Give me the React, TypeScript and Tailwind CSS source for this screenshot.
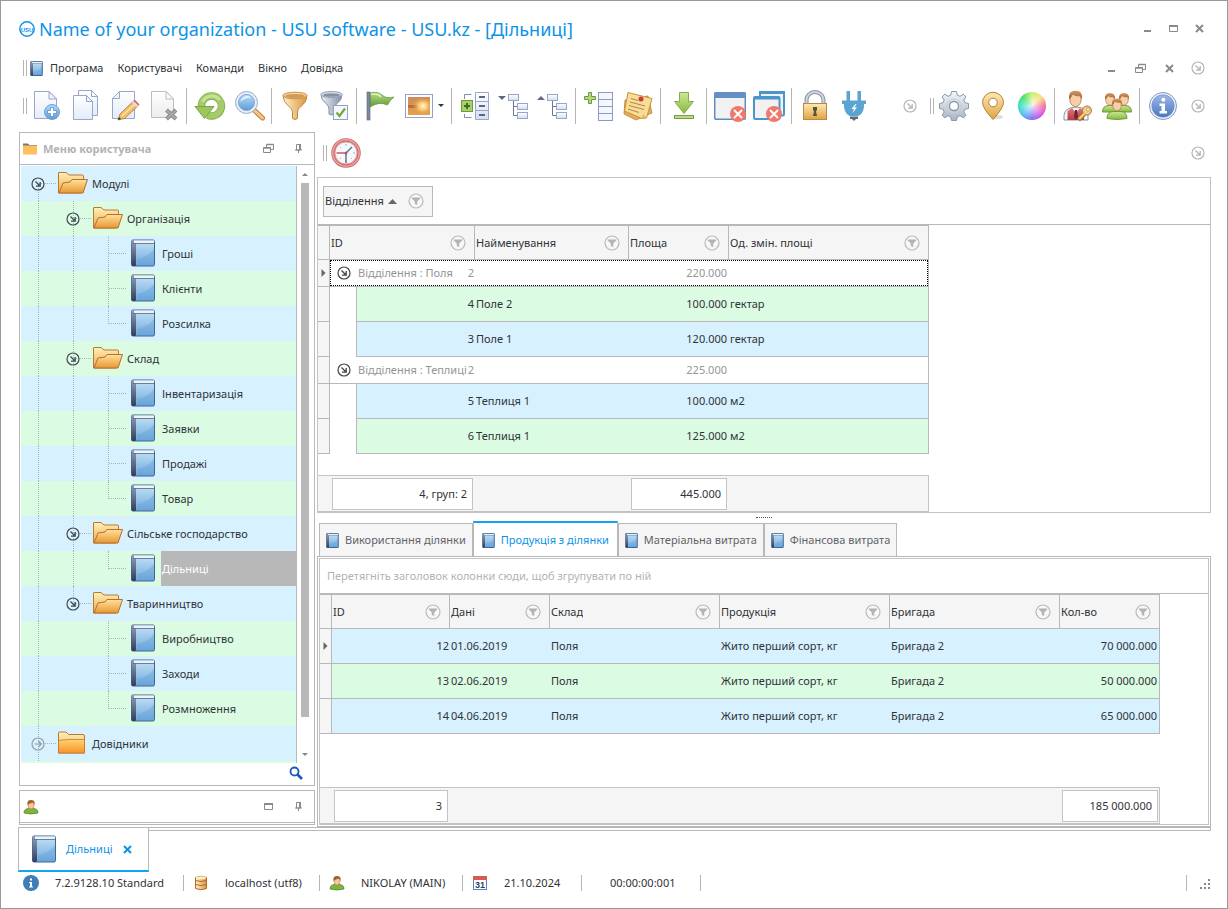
import React from "react";

type TreeRow = {
  label: string;
  level: number;
  selected?: boolean;
  lastChild?: boolean;
  closed?: boolean;
};

const TREE: TreeRow[] = [
  { label: "Модулі", level: 0 },
  { label: "Організація", level: 1 },
  { label: "Гроші", level: 2 },
  { label: "Клієнти", level: 2 },
  { label: "Розсилка", level: 2, lastChild: true },
  { label: "Склад", level: 1 },
  { label: "Інвентаризація", level: 2 },
  { label: "Заявки", level: 2 },
  { label: "Продажі", level: 2 },
  { label: "Товар", level: 2, lastChild: true },
  { label: "Сільське господарство", level: 1 },
  { label: "Дільниці", level: 2, selected: true, lastChild: true },
  { label: "Тваринництво", level: 1, lastChild: true },
  { label: "Виробництво", level: 2 },
  { label: "Заходи", level: 2 },
  { label: "Розмноження", level: 2, lastChild: true },
  { label: "Довідники", level: 0, closed: true },
];

// index of the last level 1 folder, its vertical line stops there
const LAST_FOLDER = 12;

const AREAS = [
  {
    name: "Поля",
    count: 2,
    total: "220.000",
    focused: true,
    rows: [
      { id: 4, name: "Поле 2", area: "100.000", unit: "гектар", green: true },
      { id: 3, name: "Поле 1", area: "120.000", unit: "гектар", green: false },
    ],
  },
  {
    name: "Теплиці",
    count: 2,
    total: "225.000",
    focused: false,
    rows: [
      { id: 5, name: "Теплиця 1", area: "100.000", unit: "м2", green: false },
      { id: 6, name: "Теплиця 1", area: "125.000", unit: "м2", green: true },
    ],
  },
];

const PRODUCTS = [
  { id: 12, date: "01.06.2019", qty: "70 000.000" },
  { id: 13, date: "02.06.2019", qty: "50 000.000" },
  { id: 14, date: "04.06.2019", qty: "65 000.000" },
];

const TABS = [
  "Використання ділянки",
  "Продукція з ділянки",
  "Матеріальна витрата",
  "Фінансова витрата",
];

/* ---------- gradients shared by all icons ---------- */

const Grad = ({ id, from, to, flat }: { id: string; from: string; to: string; flat?: boolean }) => (
  <linearGradient id={id} x1="0" y1="0" x2={flat ? "1" : "0"} y2={flat ? "0" : "1"}>
    <stop offset="0" stopColor={from} />
    <stop offset="1" stopColor={to} />
  </linearGradient>
);

const Defs = () => (
  <svg className="absolute h-0 w-0" aria-hidden="true">
    <defs>
      <Grad id="page" from="#ffffff" to="#e3ecf9" />
      <Grad id="grayPage" from="#ffffff" to="#ececec" />
      <Grad id="blue" from="#b9dcf7" to="#5f9bd8" />
      <Grad id="book" from="#c4e3f6" to="#6fa9dd" />
      <Grad id="spine" from="#8f9fbd" to="#333c57" />
      <Grad id="green" from="#cfe893" to="#86b93f" />
      <Grad id="gold" from="#fde9b4" to="#e0a344" />
      <Grad id="goldFlat" from="#fff0cb" to="#d9963c" flat />
      <Grad id="folderBack" from="#fff0b8" to="#eda94a" />
      <Grad id="folderFront" from="#ffe29a" to="#e79735" />
      <Grad id="folderClosed" from="#ffd272" to="#f9932a" />
      <Grad id="steel" from="#f3f6fa" to="#a9b4c4" />
      <Grad id="steelFlat" from="#eef2f7" to="#8390a5" flat />
      <Grad id="sunset" from="#c98a5e" to="#e8a04a" />
      <Grad id="flag" from="#b9dc85" to="#629a38" />
      <Grad id="info" from="#9db9e6" to="#4a76c0" />
      <Grad id="hair" from="#d79a63" to="#9c5c2d" />
      <Grad id="red" from="#e07a7a" to="#b83a42" />
      <Grad id="cell" from="#ffffff" to="#d5def1" />
      <radialGradient id="sun" cx="0.68" cy="0.5" r="0.5">
        <stop offset="0" stopColor="#fffbe0" />
        <stop offset="0.4" stopColor="#ffd47a" stopOpacity="0.9" />
        <stop offset="1" stopColor="#e8953a" stopOpacity="0" />
      </radialGradient>
    </defs>
  </svg>
);

const Svg = ({ children }: { children: React.ReactNode }) => (
  <svg viewBox="0 0 32 32" className="h-8 w-8 shrink-0" fill="none" aria-hidden="true">
    {children}
  </svg>
);

/* ---------- toolbar icons ---------- */

const NewIcon = () => (
  <Svg>
    <path d="M3.500 1.500H18L25.500 9V28.500H3.500Z" fill="url(#page)" stroke="#98a6cc" />
    <path d="M18 1.500V9H25.500Z" fill="#eef3fb" stroke="#98a6cc" />
    <circle cx="21" cy="22" r="7.500" fill="url(#blue)" stroke="#6b9fd8" />
    <path d="M19.500 17.500h3v3h3v3h-3v3h-3v-3h-3v-3h3Z" fill="#fff" stroke="#4a83c6" strokeWidth="0.700" />
  </Svg>
);

const CopyIcon = () => (
  <Svg>
    <path d="M8.500 0.500H21.500L27.500 6.500V25.500H8.500Z" fill="url(#page)" stroke="#98a6cc" />
    <path d="M21.500 0.500V6.500H27.500" stroke="#98a6cc" />
    <path d="M3.500 5.500H16.500L22.500 11.500V29.500H3.500Z" fill="url(#page)" stroke="#98a6cc" />
    <path d="M16.500 5.500V11.500H22.500Z" fill="#eef3fb" stroke="#98a6cc" />
  </Svg>
);

const EditIcon = () => (
  <Svg>
    <path d="M10.500 1.500H25.500V28.500H3.500V8.500Z" fill="url(#page)" stroke="#98a6cc" />
    <path d="M10.500 1.500V8.500H3.500Z" fill="#eef3fb" stroke="#98a6cc" />
    <path d="M9 30L11 24L24.500 11L29.500 15.500L15.500 28.500Z" fill="#f3bd67" stroke="#a8763a" strokeWidth="0.800" />
    <path d="M24.500 11L26 9.800L30.500 14.500L29.500 15.500Z" fill="#d9635c" />
    <path d="M22.500 13L24.500 11L29.500 15.500L27.500 17.500Z" fill="#d4d7de" />
    <path d="M13 26L26.500 13.500" stroke="#fbe3ae" strokeWidth="1.500" />
    <path d="M9 30L10 27L12 29Z" fill="#333" />
  </Svg>
);

const DeleteIcon = () => (
  <Svg>
    <path d="M3.500 1.500H18L25.500 9V27.500H3.500Z" fill="url(#grayPage)" stroke="#bdbdbd" />
    <path d="M18 1.500V9H25.500Z" fill="#fafafa" stroke="#bdbdbd" />
    <path d="M18.500 20L28 29M28 20L18.500 29" stroke="#8b8b8b" strokeWidth="4" />
    <path d="M19 20.500L27.500 28.500M27.500 20.500L19 28.500" stroke="#a9a9a9" strokeWidth="2" />
  </Svg>
);

const RefreshIcon = () => (
  <Svg>
    <path d="M7.500 17A10 10 0 1 1 13.500 25.200" stroke="#7fa84a" strokeWidth="7.400" />
    <path d="M7.500 17A10 10 0 1 1 14 25.200" stroke="#a3cb68" strokeWidth="6" />
    <path d="M8.500 12A10 10 0 0 1 25.500 10" stroke="#c6e297" strokeWidth="3" />
    <path d="M1 16.500H20L10.500 28.500Z" fill="#9cc65a" stroke="#7aa545" />
  </Svg>
);

const SearchIcon = () => (
  <Svg>
    <path d="M21 20L29.500 28" stroke="#b98443" strokeWidth="5" strokeLinecap="round" />
    <path d="M22 21L29.500 28" stroke="#f6c67d" strokeWidth="3" strokeLinecap="round" />
    <circle cx="13.500" cy="12.500" r="11" fill="#e9eef6" stroke="#9eabc6" />
    <circle cx="13.500" cy="12.500" r="8" fill="url(#blue)" stroke="#7ba6dc" />
    <path d="M7.500 12A6.500 6.500 0 0 1 18 7.500Q10 8 7.500 12Z" fill="#e3f3ff" />
  </Svg>
);

const FunnelIcon = () => (
  <Svg>
    <path d="M4 5.500Q4 12 10 16.500Q13.500 19 13.500 22V28.500Q16 30.500 18.500 28.500V22Q18.500 19 22 16.500Q28 12 28 5.500Z" fill="url(#goldFlat)" stroke="#c08a43" />
    <ellipse cx="16" cy="5.500" rx="12" ry="3.300" fill="#f8d69b" stroke="#c78f45" />
    <ellipse cx="16" cy="6" rx="10" ry="2" fill="#d39a52" />
  </Svg>
);

const FunnelCheckIcon = () => (
  <Svg>
    <path d="M3 4.500Q3 10 8 13.500Q11 16 11 19V24Q13.500 26 16 24V19Q16 16 19 13.500Q24 10 24 4.500Z" fill="url(#steelFlat)" stroke="#8590a3" />
    <ellipse cx="13.500" cy="4.500" rx="10.500" ry="3" fill="#dde3ec" stroke="#8f9bae" />
    <ellipse cx="13.500" cy="5" rx="8.500" ry="1.800" fill="#8592a8" />
    <rect x="15.500" y="15.500" width="14" height="14" fill="#f4f7fd" stroke="#93a1c5" />
    <path d="M18.500 22.500L21.500 26L27 18.500" stroke="#72a83b" strokeWidth="2.200" />
  </Svg>
);

const FlagIcon = () => (
  <Svg>
    <path d="M6 3Q14 1 18 5T30 7Q26 10 23.500 15Q15 11 6 17Z" fill="url(#flag)" stroke="#6a9a43" strokeWidth="0.800" />
    <path d="M7 4.500Q14 3 17 7" stroke="#dff0bf" strokeWidth="1.500" />
    <rect x="3" y="2" width="3" height="28" fill="#7d899d" stroke="#56617a" strokeWidth="0.600" />
  </Svg>
);

const PictureIcon = () => (
  <Svg>
    <rect x="2.500" y="4.500" width="27" height="23" fill="#fff" stroke="#93a1cc" />
    <rect x="5" y="7" width="22" height="18" fill="url(#sunset)" />
    <path d="M5 15H27V18H5Z" fill="#9b5732" opacity="0.600" />
    <rect x="5" y="7" width="22" height="18" fill="url(#sun)" />
  </Svg>
);

const ExpandIcon = () => (
  <Svg>
    <path d="M12.500 4.500H5.500V9M12.500 27.500H5.500V24" stroke="#7f8db0" />
    <rect x="2.500" y="10.500" width="11" height="11" fill="#a9cf6c" stroke="#6d9a3f" />
    <path d="M8 13V19M5 16H11" stroke="#3f6f1e" strokeWidth="2" />
    <path d="M16.500 2.500H29.500V29.500H16.500Z" fill="url(#cell)" stroke="#98a6cc" />
    <path d="M16.500 11.500H29.500M16.500 20.500H29.500" stroke="#98a6cc" />
    <path d="M20 7H26M20 16H26M20 25H26" stroke="#5a6684" strokeWidth="2" />
  </Svg>
);

const TreeIcon = ({ up }: { up?: boolean }) => (
  <Svg>
    <path d={up ? "M0 10H8L4 6Z" : "M0 6H8L4 10Z"} fill="#5f6a80" />
    <path d="M15.500 10V25.500H19M15.500 16.500H19" stroke="#6d7890" />
    <rect x="10.500" y="4.500" width="10" height="6" fill="url(#cell)" stroke="#98a6cc" />
    <rect x="19.500" y="13.500" width="10" height="6" fill="url(#cell)" stroke="#98a6cc" />
    <rect x="19.500" y="22.500" width="10" height="6" fill="url(#cell)" stroke="#98a6cc" />
  </Svg>
);

const AddColumnIcon = () => (
  <Svg>
    <path d="M5.500 2.500h3v4h4v3h-4v4h-3v-4h-4v-3h4Z" fill="#b5d97a" stroke="#6d9a3f" />
    <rect x="15.500" y="2.500" width="14" height="28" fill="#f3f7fe" stroke="#8b99c4" />
    <path d="M15.500 9.500H29.500M15.500 16.500H29.500M15.500 23.500H29.500" stroke="#8b99c4" />
  </Svg>
);

const NoteIcon = () => (
  <Svg>
    <path d="M3 10L26 6L30 23L14 30L2 24Z" fill="#e2ad5d" stroke="#b98238" strokeWidth="0.800" />
    <path d="M6 2.500L30 8.500L24.500 28L20 28.500L2.500 21Z" fill="#fbdc94" stroke="#c4933f" />
    <path d="M24.500 28L20 28.500L21 24Z" fill="#e6b45e" />
    <path d="M9 8.500L16 10.500M8 12L23 16M7 15.500L22 19.500M6 19L17 22.500" stroke="#a88a52" />
    <circle cx="19" cy="9" r="2.500" fill="#c93a3a" />
  </Svg>
);

const DownloadIcon = () => (
  <Svg>
    <path d="M11.500 2.500H20.500V11.500H25.500L16 23.500L6.500 11.500H11.500Z" fill="url(#green)" stroke="#8aac4f" />
    <rect x="6.500" y="25.500" width="19" height="3" fill="#b9d98a" stroke="#7a9d44" />
  </Svg>
);

const CloseBadge = ({ cx }: { cx: number }) => (
  <g>
    <circle cx={cx} cy="24" r="8" fill="#f0786c" />
    <path d={`M${cx - 4} 20L${cx + 4} 28M${cx + 4} 20L${cx - 4} 28`} stroke="#fff" strokeWidth="2" />
  </g>
);

const CloseWindowIcon = () => (
  <Svg>
    <rect x="0.700" y="2.700" width="30.600" height="26.600" rx="1.500" fill="#f2f2f2" stroke="#5b8cc0" strokeWidth="1.500" />
    <path d="M0 3.500Q0 2 1.500 2H30.500Q32 2 32 3.500V8H0Z" fill="#6590c6" />
    <CloseBadge cx={24} />
  </Svg>
);

const CloseAllIcon = () => (
  <Svg>
    <rect x="7" y="2" width="24" height="23.500" rx="1.500" fill="#f2f2f2" stroke="#4a95cc" strokeWidth="2" />
    <path d="M6 2.500H32" stroke="#4a95cc" strokeWidth="3" />
    <rect x="1" y="7" width="25.500" height="22" rx="1.500" fill="#f2f2f2" stroke="#4a95cc" strokeWidth="2" />
    <path d="M0.500 8H27" stroke="#4a95cc" strokeWidth="3" />
    <CloseBadge cx={21} />
  </Svg>
);

const LockIcon = () => (
  <Svg>
    <path d="M7.500 14V10A8.500 8 0 0 1 24.500 10V14" stroke="#87919f" strokeWidth="4" />
    <path d="M7.500 14V10A8.500 8 0 0 1 24.500 10V14" stroke="#cfd6de" strokeWidth="2" />
    <rect x="4.500" y="13.500" width="23" height="16" fill="url(#gold)" stroke="#b98a3e" />
    <path d="M14 17H18V20L17 21.500L18 26H14L15 21.500L14 20Z" fill="#5d5337" />
  </Svg>
);

const PlugIcon = () => (
  <Svg>
    <path d="M8.500 1H12V11H8.500ZM19.500 1H23V11H19.500Z" fill="#5ba3d3" />
    <path d="M4 10.500H28V14H26V17Q25 24 20 26H12Q7 24 6 17V14H4Z" fill="#5ba3d3" />
    <path d="M17.500 14L13.500 19H16L14.500 23L19 17.500H16.500L18.500 14Z" fill="#fff" />
    <path d="M12 26.500H20V29H18L16 31L14 29H12Z" fill="#5f6b76" />
  </Svg>
);

const GearIcon = () => (
  <Svg>
    <path
      d="M13.500 1.500H18.500L19.300 5.200L22 6.300L25.200 4.200L27.900 6.900L25.800 10L26.900 12.700L30.500 13.500V18.500L26.900 19.300L25.800 22L27.900 25.200L25.200 27.800L22 25.700L19.300 26.800L18.500 30.500H13.500L12.700 26.800L10 25.700L6.800 27.800L4.100 25.200L6.200 22L5.100 19.300L1.500 18.500V13.500L5.100 12.700L6.200 10L4.100 6.900L6.800 4.200L10 6.300L12.700 5.200Z"
      fill="url(#steel)"
      stroke="#8b96a8"
    />
    <circle cx="16" cy="16" r="7" stroke="#c5cdd9" />
    <circle cx="16" cy="16" r="4.500" fill="#fff" stroke="#8b96a8" strokeWidth="1.300" />
  </Svg>
);

const PinIcon = () => (
  <Svg>
    <ellipse cx="20" cy="27" rx="6" ry="2" fill="#dcdcdc" />
    <path d="M16 29.500Q5.500 18 5.500 12.500A10.500 10.200 0 0 1 26.500 12.500Q26.500 18 16 29.500Z" fill="url(#gold)" stroke="#b5813a" />
    <circle cx="16" cy="12.500" r="4.300" fill="#fff" stroke="#b5813a" />
  </Svg>
);

const ColorWheel = () => (
  <span className="h-7 w-7 rounded-full bg-[radial-gradient(circle,#ffffffcc_0%,#ffffff00_70%),conic-gradient(from_90deg,#f06a9a,#d050e8,#7a6af5,#4ab8f5,#35e0c0,#3be060,#c8f070,#f8e070,#f06a9a)]" />
);

const Head = ({ x, y }: { x: number; y: number }) => (
  <g transform={`translate(${x} ${y})`}>
    <ellipse cx="0" cy="1" rx="4.300" ry="5.200" fill="#f8cfa6" stroke="#b47a4b" strokeWidth="0.700" />
    <path d="M-4.800 0.500Q-6-6 0-6Q6-6 4.800 0.500L3.500-2Q0-1-2-3Q-3-1-4.800 0.500Z" fill="url(#hair)" />
  </g>
);

const UserKeyIcon = () => (
  <Svg>
    <path d="M2 30Q1 20 8 18L14 17L20 18Q27 20 26 30Z" fill="#f4f6fa" stroke="#8792a5" />
    <path d="M5.500 30V21L10 18L14 23L18 18L22 21V30Z" fill="url(#red)" />
    <path d="M13 20H15L16 27L14 30L12 27Z" fill="#6a2530" />
    <g transform="translate(13.500 8.500) scale(1.300)">
      <Head x={0} y={0} />
    </g>
    <circle cx="25" cy="20.500" r="4.500" fill="#f6cd83" stroke="#a87532" />
    <path d="M22.500 24L16.500 30" stroke="#a87532" strokeWidth="4" />
    <path d="M22.500 23.500L17 29" stroke="#f6cd83" strokeWidth="2.400" />
    <circle cx="26" cy="19.500" r="1.500" fill="#fff" stroke="#a87532" strokeWidth="0.600" />
  </Svg>
);

const UsersIcon = () => (
  <Svg>
    <path d="M1.500 22Q1.500 15.500 8 15.500H12L16 22ZM30.500 22Q30.500 15.500 24 15.500H20L16 22Z" fill="url(#green)" stroke="#6f9a3c" />
    <Head x={9} y={9} />
    <Head x={23} y={9} />
    <path d="M6 28.500Q6 22 12 21.500H20Q26 22 26 28.500Q16 30.500 6 28.500Z" fill="url(#green)" stroke="#6f9a3c" />
    <Head x={16} y={14.500} />
  </Svg>
);

const InfoIcon = () => (
  <Svg>
    <circle cx="16" cy="16" r="13.500" fill="#eef2fa" stroke="#8296c2" />
    <circle cx="16" cy="16" r="11.200" fill="url(#info)" stroke="#6a8cc8" strokeWidth="0.700" />
    <circle cx="16.300" cy="9.700" r="2" fill="#fff" />
    <path d="M12.500 13.500H18V21H20V23.500H12.500V21H14.500V16H12.500Z" fill="#fff" />
  </Svg>
);

const ClockIcon = () => (
  <svg viewBox="0 0 32 32" className="h-8 w-8" fill="none" aria-hidden="true">
    <circle cx="16" cy="16" r="13" stroke="#cf676a" strokeWidth="3.500" />
    <circle cx="16" cy="16" r="13.200" stroke="#eba3a3" strokeWidth="1.500" />
    <circle cx="16" cy="16" r="11" fill="#f6f8fc" stroke="#c4686c" strokeWidth="0.600" />
    <path d="M16 7V8.500M16 23.500V25M25 16H23.500M22 22L21.300 21.300M10 22L10.700 21.300M10 10L10.700 10.700" stroke="#8d97aa" />
    <path d="M16 16L22 10M16 16V26" stroke="#68758c" strokeWidth="1.500" />
    <path d="M6.500 16H16" stroke="#d5545b" strokeWidth="1.500" />
    <circle cx="16" cy="16" r="1.500" fill="#68758c" />
  </svg>
);

/* ---------- small icons ---------- */

const Book = ({ small }: { small?: boolean }) => (
  <svg
    viewBox="0 0 26 28"
    preserveAspectRatio="none"
    className={small ? "h-[15px] w-[13px] shrink-0" : "h-7 w-[26px] shrink-0"}
    aria-hidden="true"
  >
    <rect x="1.500" y="1" width="23" height="26" rx="1.500" fill="url(#book)" stroke="#3f6496" strokeWidth={small ? 2 : 1} />
    <rect x="1.500" y="1" width="4.500" height="26" rx="1.500" fill="url(#spine)" />
    <path d="M4 1.500H24V4H4Z" fill="#eef3f8" />
    <path d="M3 4.500H24" stroke="#54698c" strokeWidth="0.800" />
    <path d="M7 20Q18 18 24 10V26H7Z" fill="#5d9ad4" opacity="0.350" />
  </svg>
);

const Folder = ({ closed }: { closed?: boolean }) => (
  <svg viewBox="0 0 32 24" className="h-6 w-8 shrink-0" aria-hidden="true">
    {closed ? (
      <>
        <path d="M1.500 22V2Q1.500 1 2.500 1H9L11.500 3.500H26Q27.500 3.500 27.500 5V22Z" fill="url(#folderBack)" stroke="#b7792f" />
        <path d="M1.500 22V9.500L12 8.500H27.500V22Z" fill="url(#folderClosed)" stroke="#c27a2c" strokeWidth="0.800" />
      </>
    ) : (
      <>
        <path d="M1.500 22V2Q1.500 1.500 2 1.500H9L12 4H25.500Q26.500 4 26.500 5V10L24 22Z" fill="url(#folderBack)" stroke="#b7792f" />
        <path d="M2 22L6 12L13 11L15 8.500H30.500L26 22Z" fill="url(#folderFront)" stroke="#b7702b" />
      </>
    )}
  </svg>
);

const ArrowCircle = ({ tone, right }: { tone: string; right?: boolean }) => (
  <svg viewBox="0 0 14 14" className="h-[14px] w-[14px] shrink-0" fill="none" stroke={tone} aria-hidden="true">
    <circle cx="7" cy="7" r="6" strokeWidth="1.200" />
    {right ? <path d="M3.500 7H10M7.500 4L10.300 7L7.500 10" strokeWidth="1.200" /> : <path d="M4.500 4.500L9 9M9.200 5V9.200H5" strokeWidth="1.300" />}
  </svg>
);

const FilterButton = () => (
  <button type="button" aria-label="Фільтр" className="shrink-0">
    <svg viewBox="0 0 16 16" className="h-4 w-4" aria-hidden="true">
      <circle cx="8" cy="8" r="7" fill="#f7f7f7" stroke="#b9b9b9" strokeWidth="1.200" />
      <path d="M3.800 4.500H12.200V5.500L9.200 8.500V12L6.800 11V8.500L3.800 5.500Z" fill="#b4b4b4" />
    </svg>
  </button>
);

const Minimize = () => (
  <svg viewBox="0 0 11 11" className="h-[11px] w-[11px]" aria-hidden="true">
    <path d="M2 7H9V9H2Z" fill="#8a8a8a" />
  </svg>
);

const Maximize = () => (
  <svg viewBox="0 0 11 11" className="h-[11px] w-[11px]" aria-hidden="true">
    <path d="M1.500 2.500H9.500V8.500H1.500Z" fill="none" stroke="#8a8a8a" />
    <path d="M1 3H10" stroke="#8a8a8a" strokeWidth="2" />
  </svg>
);

const Restore = () => (
  <svg viewBox="0 0 11 11" className="h-[11px] w-[11px]" fill="none" stroke="#8a8a8a" aria-hidden="true">
    <path d="M3.500 4V1.500H10.500V6.500H8" />
    <path d="M0.500 4.500H7.500V9.500H0.500Z" fill="#fff" />
    <path d="M3.500 1.500H10.500M0.500 5H7.500" strokeWidth="1.500" />
  </svg>
);

const Cross = ({ tone = "#8a8a8a" }: { tone?: string }) => (
  <svg viewBox="0 0 11 11" className="h-[11px] w-[11px]" aria-hidden="true">
    <path d="M2 2L9 9M9 2L2 9" stroke={tone} strokeWidth="2" />
  </svg>
);

const PushPin = () => (
  <svg viewBox="0 0 11 11" className="h-[11px] w-[11px]" aria-hidden="true">
    <path d="M3.500 1.500H7V7H3.500Z" fill="none" stroke="#8a8a8a" />
    <path d="M6 1H8V7H6ZM2 6.500H9V7.500H2ZM5 7.500H6V10H5Z" fill="#8a8a8a" />
  </svg>
);

const UserBust = () => (
  <svg viewBox="0 0 16 16" className="h-4 w-4 shrink-0" aria-hidden="true">
    <path d="M1 14Q1 9.500 6 9.500H10Q15 9.500 15 14Q8 16 1 14Z" fill="#7fb53c" stroke="#4f7d25" strokeWidth="0.700" />
    <ellipse cx="8" cy="6" rx="3" ry="4" fill="#f7c898" stroke="#a66a3b" strokeWidth="0.500" />
    <path d="M4.500 6Q3.500 1 8 1Q12.500 1 11.500 6L10 3.500Q7 4 4.500 6Z" fill="#a5622f" />
  </svg>
);

const Database = () => (
  <svg viewBox="0 0 16 16" className="h-4 w-4 shrink-0" aria-hidden="true">
    <path d="M2.500 2.500Q8 0 13.500 2.500V13.500Q8 16 2.500 13.500Z" fill="url(#goldFlat)" stroke="#b3682a" />
    <path d="M2.500 5.500Q8 7.500 13.500 5.500M2.500 9.500Q8 11.500 13.500 9.500" fill="none" stroke="#b3682a" />
    <ellipse cx="8" cy="2.800" rx="5" ry="1.500" fill="#ffeebd" />
  </svg>
);

const Calendar = () => (
  <svg viewBox="0 0 16 16" className="h-4 w-4 shrink-0" aria-hidden="true">
    <rect x="1.500" y="1.500" width="13" height="13" fill="#fff" stroke="#5f7fb8" />
    <path d="M1 1H15V5H1Z" fill="#d65b4c" />
    <text x="8" y="13" textAnchor="middle" fontSize="9" fontWeight="700" fontFamily="Liberation Sans, sans-serif" fill="#2d3f66">
      31
    </text>
  </svg>
);

/* ---------- building blocks ---------- */

const Grip = () => <span className="h-4 w-1 shrink-0 border-x border-[#b5b5b5]" />;

const Separator = () => (
  <span className="flex w-[7px] shrink-0 justify-center">
    <span className="h-9 w-px bg-[#b5b5b5]" />
  </span>
);

const Tool = ({ label, children }: { label: string; children: React.ReactNode }) => (
  <button type="button" aria-label={label} className="flex h-10 w-[39px] shrink-0 items-center justify-center">
    {children}
  </button>
);

const IconButton = ({ label, children }: { label: string; children: React.ReactNode }) => (
  <button type="button" aria-label={label} className="flex h-4 w-[26px] shrink-0 items-center justify-center">
    {children}
  </button>
);

const StatusSeparator = () => <span className="h-4 w-px shrink-0 bg-[#b5b5b5]" />;

const TreeItem = ({ row, index }: { row: TreeRow; index: number }) => {
  const expander = (
    <button type="button" aria-label="Згорнути" className="relative z-10 flex">
      <ArrowCircle tone={row.closed ? "#8fa3ad" : "#3f4a4f"} right={row.closed} />
    </button>
  );

  return (
    <li className="flex h-[35px] items-center odd:bg-[#d8f1ff] even:bg-[#dcfbe3]">
      {Array.from({ length: row.level + 1 }, (_, depth) => {
        const own = depth === row.level;
        // the level 1 line runs under every row between the first and the last folder
        const full = depth === 0 ? index > 0 : depth === 1 && index < LAST_FOLDER;
        const half = (own && depth === 2) || (depth === 1 && index === LAST_FOLDER) || (depth === 0 && index === 0);
        return (
          <span key={depth} className="relative flex h-full w-[35px] shrink-0 items-center justify-center pr-px">
            {full || (own && depth === 2 && !row.lastChild) ? (
              <span className="absolute inset-y-0 left-[17px] border-l border-dotted border-[#aab2b5]" />
            ) : (
              half && (
                <span
                  className={
                    depth === 0
                      ? "absolute top-1/2 bottom-0 left-[17px] border-l border-dotted border-[#aab2b5]"
                      : "absolute top-0 bottom-1/2 left-[17px] border-l border-dotted border-[#aab2b5]"
                  }
                />
              )
            )}
            {own && <span className="absolute top-[17px] right-0 left-[18px] border-t border-dotted border-[#aab2b5]" />}
            {own && row.level < 2 && expander}
          </span>
        );
      })}
      <span className="flex w-[35px] shrink-0 justify-center pr-0.5 pb-px">
        {row.level === 2 ? <Book /> : <Folder closed={row.closed} />}
      </span>
      <span
        className={
          row.selected
            ? "flex h-full flex-1 items-center bg-[#b8b8b8] pl-px text-white"
            : "flex h-full flex-1 items-center pl-px"
        }
      >
        {row.label}
      </span>
    </li>
  );
};

const HeaderCell = ({ children, span }: { children: React.ReactNode; span?: number }) => (
  <th colSpan={span} className="h-[34px] border-r border-b border-[#b8b8b8] bg-[#f5f5f5] p-0 pr-2 pl-px text-left font-normal">
    <div className="flex items-center justify-between">
      <span className="truncate">{children}</span>
      <FilterButton />
    </div>
  </th>
);

const Marker = ({ active }: { active?: boolean }) => (
  <td className="border-r border-b border-[#b8b8b8] bg-[#f5f5f5] p-0">
    {active && (
      <svg viewBox="0 0 5 8" className="mx-auto h-2 w-[5px]" aria-hidden="true">
        <path d="M0.500 0L4.500 4L0.500 8Z" fill="#666" />
      </svg>
    )}
  </td>
);

const AreaGrid = () => (
  <table className="w-[611px] table-fixed border-separate border-spacing-0 border-t border-[#b8b8b8]">
    <colgroup>
      <col className="w-3" />
      <col className="w-[27px]" />
      <col className="w-[118px]" />
      <col className="w-[154px]" />
      <col className="w-[100px]" />
      <col className="w-[200px]" />
    </colgroup>
    <thead>
      <tr>
        <th className="border-r border-b border-[#b8b8b8] bg-[#f5f5f5] p-0" />
        <HeaderCell span={2}>ID</HeaderCell>
        <HeaderCell>Найменування</HeaderCell>
        <HeaderCell>Площа</HeaderCell>
        <HeaderCell>Од. змін. площі</HeaderCell>
      </tr>
    </thead>
    <tbody>
      {AREAS.map((group) => (
        <React.Fragment key={group.name}>
          <tr className="h-[27px]">
            <Marker active={group.focused} />
            <td colSpan={5} className="border-r border-b border-[#b8b8b8] p-0">
              <div
                className={
                  group.focused
                    ? "grid h-[26px] grid-cols-[26px_118px_154px_100px_1fr] items-center border border-dotted border-black text-[#959595]"
                    : "grid h-[26px] grid-cols-[26px_118px_154px_100px_1fr] items-center border border-transparent text-[#959595]"
                }
              >
                <button type="button" aria-label="Згорнути групу" className="flex justify-center">
                  <ArrowCircle tone="#444" />
                </button>
                <span className="flex justify-between pr-px pl-px whitespace-nowrap">
                  <span>Відділення : {group.name}</span>
                  <span>{group.count}</span>
                </span>
                <span />
                <span className="pr-0.5 text-right">{group.total}</span>
              </div>
            </td>
          </tr>
          {group.rows.map((row) => {
            const tint = row.green ? "bg-[#dcfbe3]" : "bg-[#d8f1ff]";
            return (
              <tr key={row.id} className="h-[35px]">
                <Marker />
                <td className="border-r border-[#b8b8b8] p-0" />
                <td className={`border-b border-[#b8b8b8] p-0 pr-px text-right ${tint}`}>{row.id}</td>
                <td className={`border-b border-[#b8b8b8] p-0 pl-px ${tint}`}>{row.name}</td>
                <td className={`border-b border-[#b8b8b8] p-0 pr-0.5 text-right ${tint}`}>{row.area}</td>
                <td className={`border-r border-b border-[#b8b8b8] p-0 pl-px ${tint}`}>{row.unit}</td>
              </tr>
            );
          })}
        </React.Fragment>
      ))}
    </tbody>
  </table>
);

const ProductGrid = () => (
  <table className="w-[840px] table-fixed border-separate border-spacing-0 border-t border-[#b8b8b8]">
    <colgroup>
      <col className="w-3" />
      <col className="w-[118px]" />
      <col className="w-[100px]" />
      <col className="w-[170px]" />
      <col className="w-[170px]" />
      <col className="w-[170px]" />
      <col className="w-[100px]" />
    </colgroup>
    <thead>
      <tr>
        <th className="border-r border-b border-[#b8b8b8] bg-[#f5f5f5] p-0" />
        <HeaderCell>ID</HeaderCell>
        <HeaderCell>Дані</HeaderCell>
        <HeaderCell>Склад</HeaderCell>
        <HeaderCell>Продукція</HeaderCell>
        <HeaderCell>Бригада</HeaderCell>
        <HeaderCell>Кол-во</HeaderCell>
      </tr>
    </thead>
    <tbody>
      {PRODUCTS.map((row, i) => (
        <tr key={row.id} className="h-[35px] odd:bg-[#d8f1ff] even:bg-[#dcfbe3]">
          <Marker active={i === 0} />
          <td className="border-b border-[#b8b8b8] p-0 pr-px text-right">{row.id}</td>
          <td className="border-b border-[#b8b8b8] p-0 pl-px">{row.date}</td>
          <td className="border-b border-[#b8b8b8] p-0 pl-px">Поля</td>
          <td className="border-b border-[#b8b8b8] p-0 pl-px">Жито перший сорт, кг</td>
          <td className="border-b border-[#b8b8b8] p-0 pl-px">Бригада 2</td>
          <td className="border-r border-b border-[#b8b8b8] p-0 pr-0.5 text-right">{row.qty}</td>
        </tr>
      ))}
    </tbody>
  </table>
);

export default function App() {
  return (
    <div className="flex min-h-screen flex-col border border-[#999] bg-white font-['Noto_Sans',sans-serif] text-[11px] leading-4 text-[#2f3337]">
      <Defs />

      {/* title bar */}
      <header className="flex h-[55px] shrink-0 items-center pr-[15px] pl-[18px]">
        <svg viewBox="0 0 16 16" className="h-4 w-4 shrink-0" aria-hidden="true">
          <circle cx="8" cy="8" r="7.200" fill="#fff" stroke="#0c93e8" strokeWidth="1.400" />
          <text x="8" y="10.500" textAnchor="middle" fontSize="6" fontWeight="700" fontFamily="Liberation Sans, sans-serif" fill="#0c93e8">
            USU
          </text>
        </svg>
        <h1 className="ml-1 flex-1 truncate font-['Noto_Sans',sans-serif] text-[18px] leading-6 text-[#0c93e8]">
          Name of your organization - USU software - USU.kz - [Дільниці]
        </h1>
        <IconButton label="Згорнути">
          <Minimize />
        </IconButton>
        <IconButton label="Розгорнути">
          <Maximize />
        </IconButton>
        <IconButton label="Закрити">
          <Cross />
        </IconButton>
      </header>

      {/* main menu */}
      <div className="flex h-6 shrink-0 items-center pr-4 pl-[22px]">
        <Grip />
        <span className="ml-[3px] flex">
          <Book small />
        </span>
        <nav className="ml-[7px] flex flex-1 gap-3.5">
          {["Програма", "Користувачі", "Команди", "Вікно", "Довідка"].map((item) => (
            <button key={item} type="button">
              {item}
            </button>
          ))}
        </nav>
        <div className="flex gap-[3px]">
          <IconButton label="Згорнути вікно">
            <Minimize />
          </IconButton>
          <IconButton label="Відновити вікно">
            <Restore />
          </IconButton>
          <IconButton label="Закрити вікно">
            <Cross />
          </IconButton>
          <IconButton label="Ще">
            <ArrowCircle tone="#b5b5b5" />
          </IconButton>
        </div>
      </div>

      {/* toolbar */}
      <div className="flex h-[52px] shrink-0 items-center pr-4 pl-[22px]">
        <Grip />
        <Tool label="Додати"><NewIcon /></Tool>
        <Tool label="Копіювати"><CopyIcon /></Tool>
        <Tool label="Редагувати"><EditIcon /></Tool>
        <Tool label="Видалити"><DeleteIcon /></Tool>
        <Separator />
        <Tool label="Оновити"><RefreshIcon /></Tool>
        <Tool label="Пошук"><SearchIcon /></Tool>
        <Separator />
        <Tool label="Фільтр"><FunnelIcon /></Tool>
        <Tool label="Фільтр рядків"><FunnelCheckIcon /></Tool>
        <Separator />
        <Tool label="Прапорець"><FlagIcon /></Tool>
        <Tool label="Зображення"><PictureIcon /></Tool>
        <svg viewBox="0 0 10 6" className="h-[6px] w-[10px] shrink-0" aria-hidden="true">
          <path d="M0 1H6L3 4Z" fill="#333" />
        </svg>
        <Separator />
        <Tool label="Групи"><ExpandIcon /></Tool>
        <Tool label="Розгорнути дерево"><TreeIcon /></Tool>
        <Tool label="Згорнути дерево"><TreeIcon up /></Tool>
        <Separator />
        <Tool label="Додати колонку"><AddColumnIcon /></Tool>
        <Tool label="Нотатка"><NoteIcon /></Tool>
        <Separator />
        <Tool label="Завантажити"><DownloadIcon /></Tool>
        <Separator />
        <Tool label="Закрити вікно"><CloseWindowIcon /></Tool>
        <Tool label="Закрити всі"><CloseAllIcon /></Tool>
        <Separator />
        <Tool label="Блокування"><LockIcon /></Tool>
        <Tool label="Підключення"><PlugIcon /></Tool>
        <div className="ml-auto flex items-center">
          <IconButton label="Ще">
            <ArrowCircle tone="#b5b5b5" />
          </IconButton>
          <span className="w-[7px]" />
          <Grip />
          <Tool label="Налаштування"><GearIcon /></Tool>
          <Tool label="Карта"><PinIcon /></Tool>
          <Tool label="Кольори"><ColorWheel /></Tool>
          <Separator />
          <Tool label="Права"><UserKeyIcon /></Tool>
          <Tool label="Користувачі"><UsersIcon /></Tool>
          <Separator />
          <Tool label="Інформація"><InfoIcon /></Tool>
          <span className="w-[3px]" />
          <IconButton label="Ще">
            <ArrowCircle tone="#b5b5b5" />
          </IconButton>
        </div>
      </div>

      <div className="flex flex-1 gap-0.5 pr-[16px] pl-[18px]">
        {/* user menu */}
        <aside className="flex w-[296px] shrink-0 flex-col gap-1 pb-0.5">
          <section className="flex flex-1 flex-col border border-[#b8b8b8]">
            <div className="flex h-8 shrink-0 items-center border-b border-[#b8b8b8] pr-[3px] pl-[3px]">
              <svg viewBox="0 0 14 12" className="h-3 w-[14px]" aria-hidden="true">
                <path d="M0 0.500H5L6.500 2H14V5H0Z" fill="#777" />
                <path d="M0 2.500H14V11.500H0Z" fill="#fcc15e" />
              </svg>
              <h2 className="ml-1.5 flex-1 font-bold text-[#b3b3b3]">Меню користувача</h2>
              <IconButton label="Відновити">
                <Restore />
              </IconButton>
              <span className="w-1" />
              <IconButton label="Закріпити">
                <PushPin />
              </IconButton>
            </div>
            <div className="flex flex-1 pt-px pl-px">
              <div className="flex flex-1 flex-col border-r border-[#b8b8b8] bg-[#dcfbe3]">
                <ul>
                  {TREE.map((row, i) => (
                    <TreeItem key={row.label} row={row} index={i} />
                  ))}
                </ul>
              </div>
              <div className="flex w-4 flex-col items-center justify-between py-[7px]">
                <svg viewBox="0 0 6 3" className="h-[3px] w-[6px]" aria-hidden="true">
                  <path d="M0 3L3 0L6 3Z" fill="#888" />
                </svg>
                <span className="mt-[7px] mb-9 w-2 flex-1 bg-[#b8b8b8]" />
                <svg viewBox="0 0 6 3" className="h-[3px] w-[6px]" aria-hidden="true">
                  <path d="M0 0L3 3L6 0Z" fill="#888" />
                </svg>
              </div>
              <span className="w-px" />
            </div>
            <div className="flex h-[22px] shrink-0 items-center justify-end pr-[11px] pb-[3px]">
              <button type="button" aria-label="Знайти">
                <svg viewBox="0 0 14 14" className="h-[14px] w-[14px]" fill="none" stroke="#1b57bd" aria-hidden="true">
                  <circle cx="5.500" cy="5.500" r="4" strokeWidth="1.800" />
                  <path d="M8.500 8.500L13 13" strokeWidth="2.600" />
                </svg>
              </button>
            </div>
          </section>
          <section className="flex h-[35px] shrink-0 flex-col border border-[#b8b8b8]">
            <div className="flex flex-1 items-center border-b border-[#b8b8b8] pr-[3px] pl-[3px]">
              <UserBust />
              <span className="flex-1" />
              <IconButton label="Розгорнути">
                <Maximize />
              </IconButton>
              <span className="w-1" />
              <IconButton label="Закріпити">
                <PushPin />
              </IconButton>
            </div>
            <div className="h-px" />
          </section>
        </aside>

        <main className="flex min-w-0 flex-1 flex-col">
          <div className="flex h-[45px] shrink-0 items-center pb-1 pl-1.5">
            <Grip />
            <button type="button" aria-label="Час" className="ml-[3px] flex">
              <ClockIcon />
            </button>
            <span className="flex-1" />
            <IconButton label="Ще">
              <ArrowCircle tone="#b5b5b5" />
            </IconButton>
          </div>

          {/* upper grid, grouped by department */}
          <section className="border border-[#c3c3c3]">
            <div className="flex h-[47px] items-center border-b border-[#b8b8b8] pl-[5px]">
              <div className="flex h-[31px] w-[110px] items-center border border-[#b8b8b8] bg-[#f5f5f5] pr-2 pl-px">
                <span>Відділення</span>
                <svg viewBox="0 0 9 5" className="ml-1 h-[5px] w-[9px]" aria-hidden="true">
                  <path d="M0 5L4.500 0L9 5Z" fill="#666" />
                </svg>
                <span className="flex-1" />
                <FilterButton />
              </div>
            </div>
            <AreaGrid />
            <div className="mt-[21px] flex h-[37px] w-[611px] items-center border border-l-0 border-[#c3c3c3] bg-[#f5f5f5] pl-3.5">
              <output className="flex h-8 w-[141px] items-center justify-end border border-[#c3c3c3] bg-white pr-[5px]">4, груп: 2</output>
              <output className="ml-[158px] flex h-8 w-24 items-center justify-end border border-[#c3c3c3] bg-white pr-[5px]">445.000</output>
            </div>
          </section>

          <div className="flex h-2 shrink-0 items-center justify-center">
            <span className="w-4 border-t border-dotted border-[#555]" />
          </div>

          {/* detail tabs */}
          <div role="tablist" className="flex h-[35px] shrink-0 items-end pl-0.5">
            {TABS.map((tab, i) => {
              const active = i === 1;
              return (
                <button
                  key={tab}
                  type="button"
                  role="tab"
                  aria-selected={active}
                  className={
                    active
                      ? "-mb-px flex h-9 items-center gap-1.5 border-x border-t-2 border-x-[#b8b8b8] border-t-[#0ea5f5] bg-white px-2 whitespace-nowrap text-[#0c93e8]"
                      : "flex h-[33px] items-center gap-1.5 border border-b-0 border-[#b8b8b8] bg-[#f5f5f5] px-1.5 whitespace-nowrap text-[#5f6368]"
                  }
                >
                  <Book small />
                  {tab}
                </button>
              );
            })}
          </div>
          <section className="flex flex-1 flex-col border border-[#b8b8b8] p-px">
            <div className="flex flex-1 flex-col border border-[#c3c3c3]">
              <div className="flex h-[35px] items-center border-b border-[#b8b8b8] pl-[7px] text-[#b3b3b3]">
                Перетягніть заголовок колонки сюди, щоб згрупувати по ній
              </div>
              <ProductGrid />
              <div className="flex-1" />
              <div className="flex h-[37px] w-[840px] items-center justify-between border border-l-0 border-[#c3c3c3] bg-[#f5f5f5] pr-px pl-3.5">
                <output className="flex h-8 w-[114px] items-center justify-end border border-[#c3c3c3] bg-white pr-[5px]">3</output>
                <output className="flex h-8 w-24 items-center justify-end border border-[#c3c3c3] bg-white pr-[5px]">185 000.000</output>
              </div>
            </div>
          </section>
        </main>
      </div>

      {/* open documents */}
      <div className="flex h-[45px] shrink-0 items-start pr-[16px] pl-[17px]">
        <div className="flex h-[45px] w-[131px] items-center border border-b-2 border-[#b8b8b8] border-b-[#0ea5f5] pl-3 text-[#0c93e8]">
          <Book />
          <span className="ml-[9px]">Дільниці</span>
          <button type="button" aria-label="Закрити вкладку" className="ml-2.5">
            <Cross tone="#0c93e8" />
          </button>
        </div>
        <div className="h-1 flex-1 border-y border-r border-[#b8b8b8]" />
      </div>

      {/* status bar */}
      <footer className="mb-[14px] flex h-[22px] shrink-0 items-center pr-[16px] pl-[22px]">
        <span className="flex w-[160px] items-center gap-4">
          <svg viewBox="0 0 16 16" className="h-4 w-4 shrink-0" aria-hidden="true">
            <circle cx="8" cy="8" r="8" fill="#3f7cb8" />
            <path d="M7 3.500H9V5.500H7ZM6 7H9V11.500H10V12.500H6V11.500H7V8H6Z" fill="#fff" />
          </svg>
          7.2.9128.10 Standard
        </span>
        <StatusSeparator />
        <span className="flex w-[135px] items-center gap-4 pl-[9px]">
          <Database />
          localhost (utf8)
        </span>
        <StatusSeparator />
        <span className="flex w-[142px] items-center gap-4 pl-[9px]">
          <UserBust />
          NIKOLAY (MAIN)
        </span>
        <StatusSeparator />
        <span className="flex w-[118px] items-center gap-4 pl-[9px]">
          <Calendar />
          21.10.2024
        </span>
        <StatusSeparator />
        <span className="w-[118px] pl-7">00:00:00:001</span>
        <StatusSeparator />
        <span className="flex-1" />
        <StatusSeparator />
        <svg viewBox="0 0 12 12" className="mt-1 ml-3 h-3 w-3" aria-hidden="true">
          <path d="M9 0H11V2H9ZM5 4H7V6H5ZM9 4H11V6H9ZM1 8H3V10H1ZM5 8H7V10H5ZM9 8H11V10H9Z" fill="#888" />
        </svg>
      </footer>
    </div>
  );
}
